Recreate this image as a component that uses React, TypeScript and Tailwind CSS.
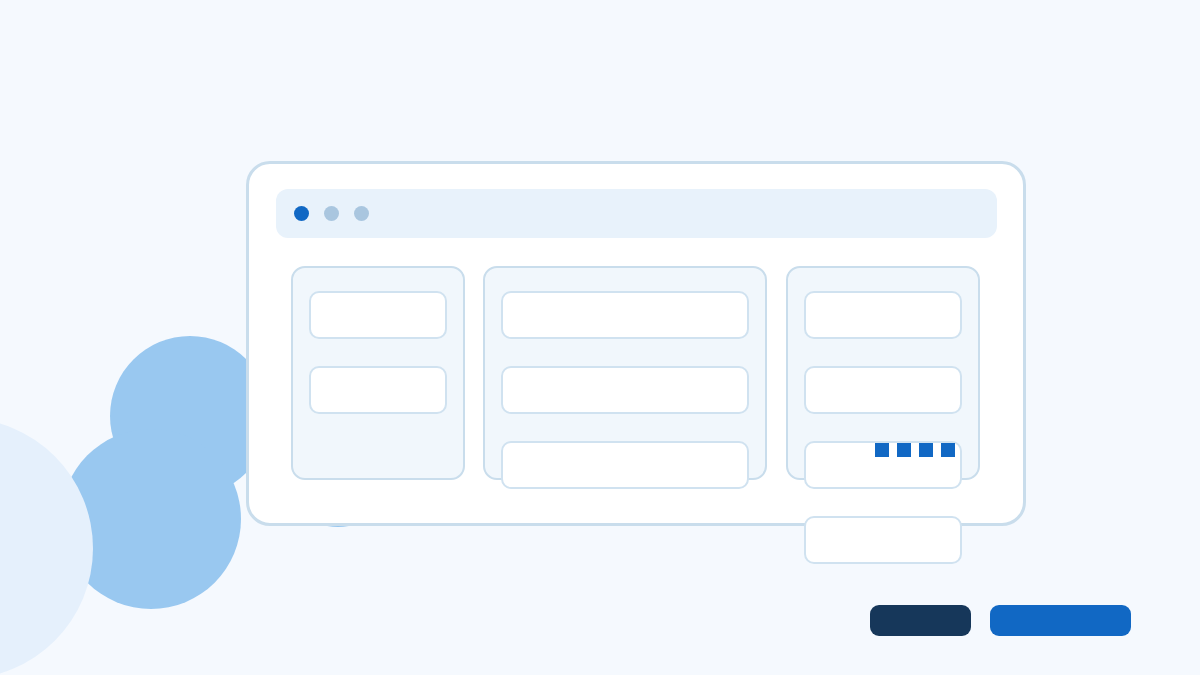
import React from "react";

function Card({ children }: { children?: React.ReactNode }) {
  return (
    <div className="relative h-[48px] shrink-0 rounded-[10px] border-2 border-[#d0e2f0] bg-white">
      {children}
    </div>
  );
}

function Column({ width, count, children }: { width: string; count: number; children?: React.ReactNode }) {
  return (
    <div
      className={`${width} h-[214px] shrink-0 rounded-[14px] border-2 border-[#c9ddec] bg-[#f1f7fc] px-[16px] pt-[23px] flex flex-col gap-[27px]`}
    >
      {Array.from({ length: count }).map((_, i) => (
        <Card key={i}>{i === 2 ? children : null}</Card>
      ))}
    </div>
  );
}

export default function App() {
  return (
    <div className="relative w-[1200px] h-[675px] overflow-hidden bg-[#f5f9fe] pt-[161px] font-['Liberation_Sans',sans-serif]">
      {/* background blobs */}
      <div className="absolute left-[110px] top-[336px] w-[160px] h-[160px] rounded-full bg-[#99c8f0]" />
      <div className="absolute left-[61px] top-[429px] w-[180px] h-[180px] rounded-full bg-[#99c8f0]" />
      <div className="absolute left-[283px] top-[417px] w-[110px] h-[110px] rounded-full bg-[#99c8f0]" />
      <div className="absolute left-[-168px] top-[418px] w-[261px] h-[261px] rounded-full bg-[#e5f0fc]" />

      {/* browser window */}
      <div className="relative z-10 ml-[246px] w-[780px] rounded-[24px] border-[3px] border-[#c9ddec] bg-white px-[27px] pt-[25px] pb-[43px]">
        <div className="h-[49px] w-[721px] rounded-[12px] bg-[#e8f2fb] flex items-center gap-[15px] pl-[18px]">
          <span className="w-[15px] h-[15px] rounded-full bg-[#1168c4]" />
          <span className="w-[15px] h-[15px] rounded-full bg-[#a9c6df]" />
          <span className="w-[15px] h-[15px] rounded-full bg-[#a9c6df]" />
        </div>
        <div className="mt-[28px] ml-[15px] flex gap-[18px]">
          <Column width="w-[174px]" count={2} />
          <Column width="w-[284px]" count={3} />
          <div className="ml-px">
            <Column width="w-[194px]" count={4}>
              <div className="absolute top-0 right-[5px] flex gap-[8px]">
                <span className="w-[14px] h-[14px] bg-[#1168c4]" />
                <span className="w-[14px] h-[14px] bg-[#1168c4]" />
                <span className="w-[14px] h-[14px] bg-[#1168c4]" />
                <span className="w-[14px] h-[14px] bg-[#1168c4]" />
              </div>
            </Column>
          </div>
        </div>
      </div>

      {/* actions */}
      <div className="mt-[79px] flex justify-end gap-[19px] pr-[69px]">
        <div className="w-[101px] h-[31px] rounded-[9px] bg-[#16375a]" />
        <div className="w-[141px] h-[31px] rounded-[9px] bg-[#1168c4]" />
      </div>
    </div>
  );
}
